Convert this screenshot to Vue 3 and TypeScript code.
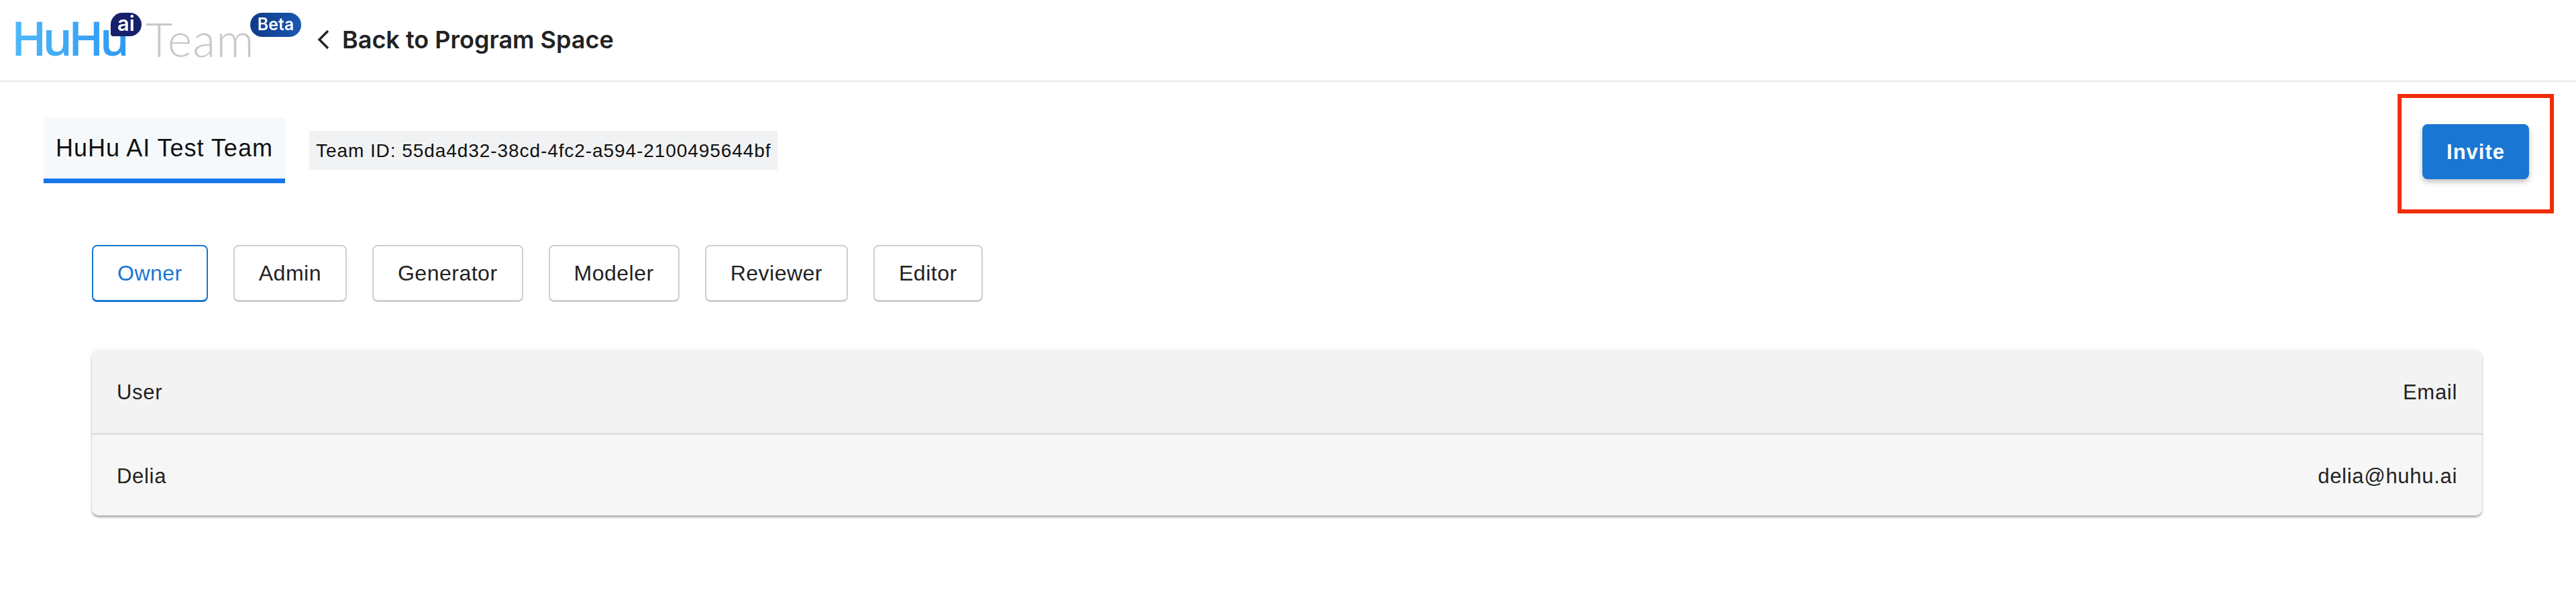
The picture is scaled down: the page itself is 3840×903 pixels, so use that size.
<script setup lang="ts">
const roles: string[] = ['Owner', 'Admin', 'Generator', 'Modeler', 'Reviewer', 'Editor']
</script>

<template>
  <div class="page">
    <header class="topbar">
      <div class="logo">
        <span class="huhu">HuHu</span>
        <span class="ai">ai</span>
        <span class="team">Team</span>
        <span class="beta">Beta</span>
      </div>
      <a class="back">
        <svg class="chev" viewBox="0 0 20 30" width="20" height="30" aria-hidden="true">
          <path d="M17 2 L4 15 L17 28" fill="none" stroke="#222" stroke-width="3.4" />
        </svg>
        <span>Back to Program Space</span>
      </a>
    </header>

    <section class="titlebar">
      <div class="tab">HuHu AI Test Team</div>
      <div class="teamid">Team ID: 55da4d32-38cd-4fc2-a594-2100495644bf</div>
      <div class="invite-wrap">
        <button class="invite">Invite</button>
      </div>
    </section>

    <main class="content">
      <div class="roles">
        <button v-for="(r, i) in roles" :key="r" class="role" :class="{ active: i === 0 }">{{ r }}</button>
      </div>
      <div class="table">
        <div class="row head"><span>User</span><span>Email</span></div>
        <div class="row"><span>Delia</span><span>delia@huhu.ai</span></div>
      </div>
    </main>
  </div>
</template>

<style>
html, body { margin: 0; background: #fff; }
</style>

<style scoped>
.page {
  width: 3840px;
  height: 903px;
  background: #fff;
  font-family: "Liberation Sans", Arial, sans-serif;
  color: #222;
  overflow: hidden;
}
.topbar {
  height: 120px;
  border-bottom: 2px solid #e8e8e8;
  display: flex;
  align-items: center;
  box-sizing: content-box;
}
.logo {
  position: relative;
  width: 472px;
  height: 120px;
  flex: none;
  filter: blur(0.5px);
}
.huhu {
  position: absolute;
  left: 17px;
  top: 18px;
  font-family: "Open Sans", sans-serif;
  font-weight: 600;
  font-size: 70px;
  line-height: 76px;
  letter-spacing: -6px;
  background: linear-gradient(90deg, #4fb9f7, #2f98f3);
  -webkit-background-clip: text;
  background-clip: text;
  color: transparent;
}
.ai {
  position: absolute;
  left: 165px;
  top: 19px;
  width: 46px;
  height: 35px;
  background: #17206b;
  border-radius: 18px 18px 18px 4px;
  color: #fff;
  font-family: "Inter", sans-serif;
  font-weight: 600;
  font-size: 31px;
  line-height: 32px;
  text-align: center;
}
.team {
  position: absolute;
  left: 217px;
  top: 20px;
  font-family: "Lato", sans-serif;
  font-weight: 300;
  font-size: 70px;
  line-height: 76px;
  letter-spacing: 1px;
  color: #c8c8c8;
}
.beta {
  position: absolute;
  left: 373px;
  top: 19px;
  width: 76px;
  height: 36px;
  border-radius: 18px;
  background: linear-gradient(90deg, #0f3a8a, #1b57b0);
  color: #fff;
  font-family: "Inter", sans-serif;
  font-weight: 600;
  font-size: 25px;
  line-height: 35px;
  text-align: center;
}
.back {
  display: flex;
  align-items: center;
  gap: 18px;
  font-family: "Inter", sans-serif;
  font-weight: 600;
  font-size: 36px;
  color: #222;
  margin-top: -2px;
}
.chev { flex: none; }
.titlebar {
  display: flex;
  align-items: flex-start;
  padding: 53px 33px 0 65px;
  height: 189px;
  box-sizing: border-box;
}
.tab {
  width: 360px;
  height: 98px;
  box-sizing: border-box;
  border-bottom: 7px solid #1976e8;
  background: #f6f9fb;
  font-size: 36px;
  line-height: 91px;
  letter-spacing: 1px;
  text-align: center;
  color: #111;
}
.teamid {
  margin: 20px 0 0 36px;
  width: 698px;
  height: 58px;
  background: #f1f2f3;
  font-size: 28px;
  line-height: 60px;
  letter-spacing: 0.93px;
  padding-left: 10px;
  box-sizing: border-box;
  white-space: nowrap;
  color: #111;
}
.invite-wrap {
  margin: -35px 0 0 auto;
  width: 233px;
  height: 178px;
  box-sizing: border-box;
  border: 6px solid #f32d05;
  display: flex;
  justify-content: center;
  padding: 39px 0 0 0;
}
.invite {
  width: 159px;
  height: 82px;
  border: 0;
  border-radius: 8px;
  background: #1976d2;
  color: #fff;
  font-family: "Liberation Sans", Arial, sans-serif;
  font-weight: 700;
  font-size: 31px;
  letter-spacing: 1px;
  padding-top: 3px;
  box-shadow: 0 4px 8px rgba(0, 0, 0, 0.25);
}
.content { padding: 54px 140px 0 137px; }
.roles { display: flex; gap: 38px; }
.role {
  height: 85px;
  padding: 0 36px;
  border: 2px solid #cfcfcf;
  border-bottom-width: 3px;
  border-radius: 8px;
  background: #fff;
  font-family: "Liberation Sans", Arial, sans-serif;
  font-size: 32px;
  letter-spacing: 0.5px;
  color: #222;
}
.role.active { border-color: #1976d2; color: #1976d2; }
.table {
  margin-top: 71px;
  border-radius: 10px;
  overflow: hidden;
  box-shadow: 0 3px 3px rgba(0, 0, 0, 0.3), 0 0 5px rgba(0, 0, 0, 0.06);
}
.row {
  height: 120px;
  padding: 3px 37px 0;
  box-sizing: border-box;
  background: #f6f6f6;
  display: flex;
  justify-content: space-between;
  align-items: center;
  font-size: 31px;
  letter-spacing: 0.7px;
  color: #222;
}
.row.head {
  height: 127px;
  background: #f3f3f3;
  border-bottom: 3px solid #e0e0e0;
}
</style>
